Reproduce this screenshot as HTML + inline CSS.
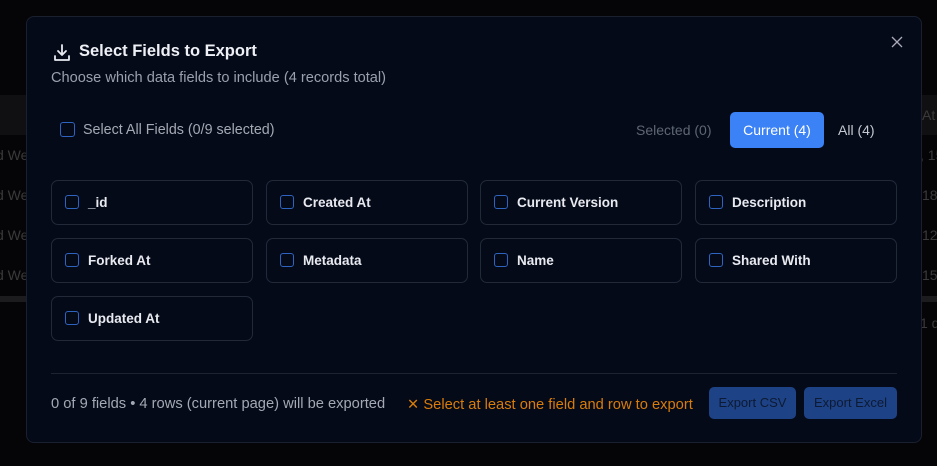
<!DOCTYPE html><html><head><style>
body{margin:0;width:937px;height:466px;background:#050507;font-family:"Liberation Sans",sans-serif;position:relative;overflow:hidden}
.bg{position:absolute;color:#3a3a3a;font-size:14px;white-space:nowrap}
.modal{position:absolute;left:26px;top:16px;width:896px;height:427px;background:#040a18;border:1px solid #1a2030;border-radius:8px;box-sizing:border-box}
.a{position:absolute;white-space:nowrap}
.card{position:absolute;width:202px;height:45px;border:1px solid #222a3a;border-radius:7px;box-sizing:border-box;color:#e8eaf0;font-size:13.5px;font-weight:bold}
.cb{position:absolute;width:14px;height:14px;border:1.5px solid #2f63c0;border-radius:3px;box-sizing:border-box}
.card .cb{left:13px;top:14px}
.card span{position:absolute;left:36px;top:14px}
.btn{position:absolute;top:370px;height:32px;background:#1e4286;border-radius:5px;color:#0d1a33;font-size:13px;text-align:center;line-height:32px}
</style></head><body>
<div class="a" style="left:0;top:95px;width:937px;height:40px;background:#101012"></div>
<div class="a" style="left:0;top:296px;width:937px;height:6px;background:#1c1c1e"></div>
<div class="bg" style="left:-4px;top:147px">d We</div>
<div class="bg" style="left:-4px;top:187px">d We</div>
<div class="bg" style="left:-4px;top:227px">d We</div>
<div class="bg" style="left:-4px;top:267px">d We</div>
<div class="bg" style="left:922px;top:107px">At</div>
<div class="bg" style="left:920px;top:147px">, 15</div>
<div class="bg" style="left:922px;top:187px">18</div>
<div class="bg" style="left:922px;top:227px">12</div>
<div class="bg" style="left:922px;top:267px">15</div>
<div class="bg" style="left:920px;top:315px">1 d</div>
<div class="modal">
<svg class="a" style="left:25px;top:26px" width="20" height="20" viewBox="0 0 20 20" fill="none" stroke="#e8eaf0" stroke-width="1.8" stroke-linecap="round" stroke-linejoin="round"><path d="M10 2v10M6 8l4 4 4-4M3 13v4h14v-4"/></svg>
<div class="a" style="left:52px;top:25px;color:#eef0f5;font-size:16.5px;font-weight:bold">Select Fields to Export</div>
<div class="a" style="left:24px;top:53px;color:#9aa0ad;font-size:14.6px">Choose which data fields to include (4 records total)</div>
<svg class="a" style="left:864px;top:19px" width="12" height="12" viewBox="0 0 12 12" stroke="#aab" stroke-width="1.3"><path d="M1 1l10 10M11 1L1 11"/></svg>
<div class="cb" style="left:33px;top:105px;width:15px;height:15px"></div>
<div class="a" style="left:56px;top:105px;color:#a4a9b4;font-size:14.3px">Select All Fields (0/9 selected)</div>
<div class="a" style="left:609px;top:105px;color:#5f6673;font-size:14px">Selected (0)</div>
<div class="a" style="left:703px;top:95px;width:94px;height:36px;background:#3b82f6;border-radius:5px;color:#fff;font-size:14px;text-align:center;line-height:36px">Current (4)</div>
<div class="a" style="left:811px;top:105px;color:#c4c8d0;font-size:14px">All (4)</div>
<div class="card" style="left:24px;top:163px"><div class="cb"></div><span>_id</span></div>
<div class="card" style="left:239px;top:163px"><div class="cb"></div><span>Created At</span></div>
<div class="card" style="left:453px;top:163px"><div class="cb"></div><span>Current Version</span></div>
<div class="card" style="left:668px;top:163px"><div class="cb"></div><span>Description</span></div>
<div class="card" style="left:24px;top:221px"><div class="cb"></div><span>Forked At</span></div>
<div class="card" style="left:239px;top:221px"><div class="cb"></div><span>Metadata</span></div>
<div class="card" style="left:453px;top:221px"><div class="cb"></div><span>Name</span></div>
<div class="card" style="left:668px;top:221px"><div class="cb"></div><span>Shared With</span></div>
<div class="card" style="left:24px;top:279px"><div class="cb"></div><span>Updated At</span></div>
<div class="a" style="left:24px;top:356px;width:846px;height:1px;background:#1c2333"></div>
<div class="a" style="left:24px;top:379px;color:#a4a9b4;font-size:14.7px">0 of 9 fields • 4 rows (current page) will be exported</div>
<div class="a" style="left:380px;top:379px;color:#d97c0a;font-size:14.7px">✕ Select at least one field and row to export</div>
<div class="btn" style="left:682px;width:87px">Export CSV</div>
<div class="btn" style="left:777px;width:93px">Export Excel</div>
</div>
</body></html>
